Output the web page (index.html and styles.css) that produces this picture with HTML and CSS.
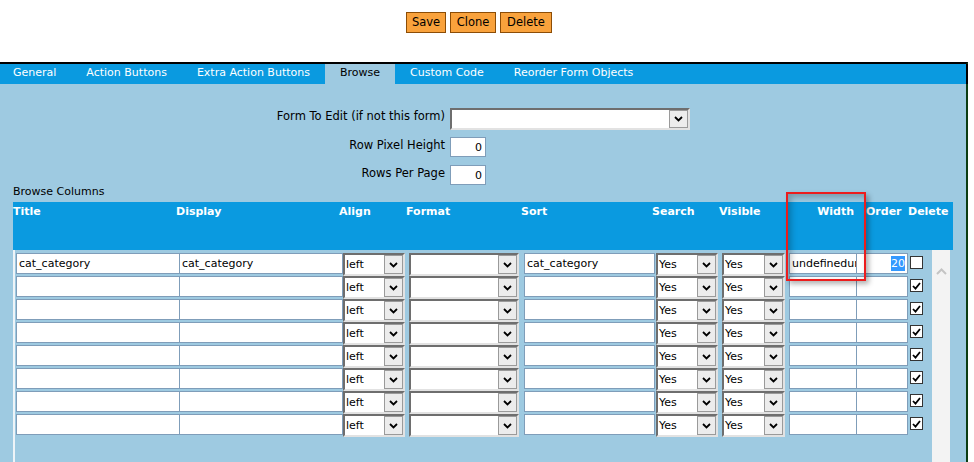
FILE: index.html
```html
<!DOCTYPE html>
<html>
<head>
<meta charset="utf-8">
<link rel="stylesheet" href="styles.css">
</head>
<body>
<div class="top">
  <button class="btn btn-save">Save</button>
  <button class="btn btn-clone">Clone</button>
  <button class="btn btn-delete">Delete</button>
</div>
<div class="panel">
  <div class="tabs">
    <span class="tab first">General</span>
    <span class="tab">Action Buttons</span>
    <span class="tab">Extra Action Buttons</span>
    <span class="tab active">Browse</span>
    <span class="tab">Custom Code</span>
    <span class="tab">Reorder Form Objects</span>
  </div>
  <div class="content">
    <div class="form">
      <div class="lbl">Form To Edit (if not this form)</div>
      <div class="sel big"><span class="val"></span><span class="dd"><svg width="9" height="6" viewBox="0 0 9 6"><path d="M1 1l3.5 3.5L8 1" fill="none" stroke="#000" stroke-width="1.8"/></svg></span></div>
      <div class="lbl">Row Pixel Height</div>
      <div class="num">0</div>
      <div class="lbl">Rows Per Page</div>
      <div class="num">0</div>
    </div>
    <div class="section">Browse Columns</div>
    <div class="head">
      <span>Title</span><span>Display</span><span>Align</span><span>Format</span><span>Sort</span><span>Search</span><span>Visible</span><span class="h-width">Width</span><span>Order</span><span>Delete</span>
    </div>
    <div class="scroll">
      <div class="rows" id="rows"></div>
      <div class="vbar"><svg width="11" height="7" viewBox="0 0 11 7"><path d="M1 6l4.5-4.5L10 6" fill="none" stroke="#c4c4c4" stroke-width="2"/></svg></div>
    </div>
  </div>
</div>
<div class="annot"></div>
<script src="app.js"></script>
</body>
</html>
```
FILE: app.js
```js
(function () {
  var chev = '<svg width="9" height="6" viewBox="0 0 9 6"><path d="M1 1l3.5 3.5L8 1" fill="none" stroke="#000" stroke-width="1.8"/></svg>';
  var check = '<svg width="9" height="8" viewBox="0 0 9 8"><path d="M1 4l2.5 2.6L8 1" fill="none" stroke="#000" stroke-width="1.8"/></svg>';
  function sel(cls, v) {
    return '<div class="sel ' + cls + '"><span class="val">' + v + '</span><span class="dd">' + chev + '</span></div>';
  }
  var html = '';
  for (var i = 0; i < 8; i++) {
    var first = i === 0;
    html += '<div class="row">' +
      '<div class="tf c-title">' + (first ? 'cat_category' : '') + '</div>' +
      '<div class="tf c-display">' + (first ? 'cat_category' : '') + '</div>' +
      sel('c-align', 'left') +
      sel('c-format', '') +
      '<div class="tf c-sort">' + (first ? 'cat_category' : '') + '</div>' +
      sel('c-search', 'Yes') +
      sel('c-visible', 'Yes') +
      '<div class="tf c-width">' + (first ? 'undefinedundefined' : '') + '</div>' +
      '<div class="tf c-order">' + (first ? '<span class="hl">20</span>' : '') + '</div>' +
      '<div class="cb">' + (first ? '' : check) + '</div>' +
      '</div>';
  }
  document.getElementById('rows').innerHTML = html;
})();
```
FILE: styles.css
```css
body {
  margin: 0;
  position: relative;
  background: #fff;
  color: #000;
  font-family: "DejaVu Sans", "Liberation Sans", sans-serif;
  font-size: 11px;
}

.top {
  height: 62px;
  box-sizing: border-box;
  padding: 12px 0 0 406px;
  display: flex;
  gap: 4px;
  align-items: flex-start;
}

.btn {
  height: 21px;
  box-sizing: border-box;
  padding: 0;
  background: #f9a23c;
  border: 1px solid #8c4d06;
  font-family: "DejaVu Sans", sans-serif;
  font-size: 11.5px;
  line-height: 19px;
  color: #000;
}
.btn-save { width: 40px; }
.btn-clone { width: 46px; }
.btn-delete { width: 52px; }

.panel {
  width: 968px;
  box-sizing: border-box;
  border-top: 2px solid #000;
  border-right: 2px solid #0b3d12;
}

.tabs {
  display: flex;
  height: 20px;
  background: #0a9ae0;
  margin-right: -2px;
  border-right: 2px solid #000;
}
.tab {
  padding: 0 15px;
  color: #fff;
  line-height: 18px;
  white-space: nowrap;
}
.tab.first { padding-left: 13px; }
.tab.active {
  background: #9ecae1;
  color: #000;
}

.content {
  background: #9ecae1;
  height: 378px;
  box-sizing: border-box;
  padding-top: 24px;
  overflow: hidden;
}

.form {
  display: grid;
  grid-template-columns: 445px auto;
  grid-template-rows: 22px 21px 20px;
  column-gap: 5px;
  row-gap: 7px;
  align-items: start;
}
.lbl {
  text-align: right;
  line-height: 14px;
  padding-top: 1px;
  font-size: 11.5px;
}
.num {
  width: 36px;
  height: 20px;
  box-sizing: border-box;
  border: 1px solid #7f9db9;
  background: #fff;
  text-align: right;
  padding-right: 3px;
  line-height: 19px;
}

.section {
  margin-top: 0;
  padding-left: 13px;
  line-height: 14px;
  height: 14px;
  margin-bottom: 3px;
}

.head {
  margin-left: 13px;
  width: 940px;
  height: 48px;
  box-sizing: border-box;
  padding-top: 3px;
  background: #0a9ae0;
  color: #fff;
  font-weight: bold;
  line-height: 14px;
  display: grid;
  grid-template-columns: 163px 163px 67px 115px 131px 67px 67px 80px 42px 1fr;
  white-space: nowrap;
}
.head .h-width {
  text-align: right;
  padding-right: 12px;
}

.scroll {
  margin-left: 13px;
  width: 937px;
  height: 212px;
  box-sizing: border-box;
  border-left: 2px solid #eef4f8;
  display: flex;
}
.rows {
  flex: 1;
  padding: 3px 0 0 1px;
}
.vbar {
  width: 18px;
  background: #f3f3f3;
  display: flex;
  justify-content: center;
  padding-top: 18px;
  box-sizing: border-box;
}
.vbar svg { display: block; }

.row {
  display: flex;
  height: 23px;
  align-items: flex-start;
}

.tf {
  height: 21px;
  box-sizing: border-box;
  border: 1px solid #7f9db9;
  background: #fff;
  padding: 0 2px;
  line-height: 20px;
  overflow: hidden;
  white-space: nowrap;
}
.c-title { width: 164px; }
.c-display { width: 164px; margin-left: -1px; }
.c-sort { width: 131px; margin-left: 5px; }
.c-width { width: 68px; margin-left: 4px; text-overflow: clip; }
.c-order { width: 52px; margin-left: -1px; text-align: right; }
.hl {
  background: #3399ff;
  color: #fff;
  padding: 1px 0;
}

.sel {
  height: 23px;
  box-sizing: border-box;
  border: 2px solid;
  border-color: #6e6e6e #e2e2e2 #e2e2e2 #6e6e6e;
  background: #fff;
  display: flex;
}
.sel .val {
  flex: 1;
  padding-left: 1px;
  line-height: 20px;
  white-space: nowrap;
  overflow: hidden;
}
.sel .dd {
  width: 19px;
  height: 19px;
  box-sizing: border-box;
  background: #ececec;
  border: 1px solid #9a9a9a;
  display: flex;
  align-items: center;
  justify-content: center;
}
.sel .dd svg { display: block; }
.sel.big { width: 240px; height: 22px; }
.sel.big .dd { height: 18px; }
.c-align { width: 62px; }
.c-format { width: 110px; margin-left: 4px; }
.c-search { width: 62px; margin-left: 1px; }
.c-visible { width: 63px; margin-left: 4px; }

.cb {
  width: 13px;
  height: 13px;
  box-sizing: border-box;
  margin: 3px 0 0 2px;
  border: 1px solid #333;
  background: #fff;
  display: flex;
  align-items: center;
  justify-content: center;
}
.cb svg { display: block; }

.annot {
  position: absolute;
  left: 786px;
  top: 192px;
  width: 80px;
  height: 89px;
  box-sizing: border-box;
  border: 2px solid #ec1c1c;
  box-shadow: 3px 3px 5px rgba(0, 0, 0, 0.3), inset 3px 3px 6px rgba(0, 0, 0, 0.25);
}
```
